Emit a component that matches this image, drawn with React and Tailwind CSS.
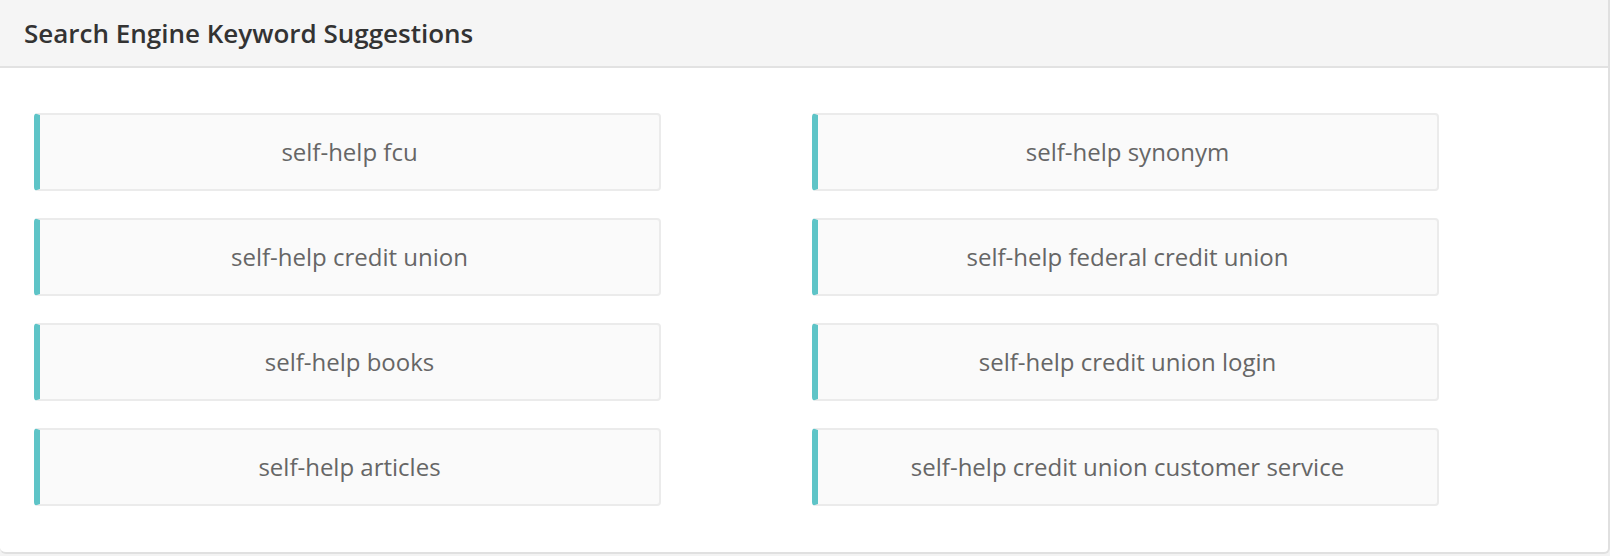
const keywords = [
  "self-help fcu",
  "self-help synonym",
  "self-help credit union",
  "self-help federal credit union",
  "self-help books",
  "self-help credit union login",
  "self-help articles",
  "self-help credit union customer service",
];

export default function App() {
  return (
    <div className="w-[1610px] h-[556px] bg-[#f3f3f3] font-['Open_Sans',sans-serif]">
      <div className="h-[554px] bg-white border-r-2 border-b-2 border-[#e0e0e0] rounded-br-[6px] rounded-bl-[6px] overflow-hidden">
        {/* header */}
        <div className="h-[68px] bg-[#f5f5f5] border-b-2 border-[#e2e2e2] px-[24px] flex items-center">
          <h3 className="text-[26px] font-semibold text-[#333]">Search Engine Keyword Suggestions</h3>
        </div>

        {/* keyword grid */}
        <div className="pt-[45px] pl-[34px] grid grid-cols-[627px_627px] gap-x-[151px] gap-y-[27px]">
          {keywords.map((k) => (
            <div
              key={k}
              className="h-[78px] bg-[#fafafa] border-2 border-[#ebebeb] border-l-[6px] border-l-[#5ec4c7] rounded-[4px] flex items-center justify-center text-[24px] text-[#666]"
            >
              {k}
            </div>
          ))}
        </div>
      </div>
    </div>
  );
}
